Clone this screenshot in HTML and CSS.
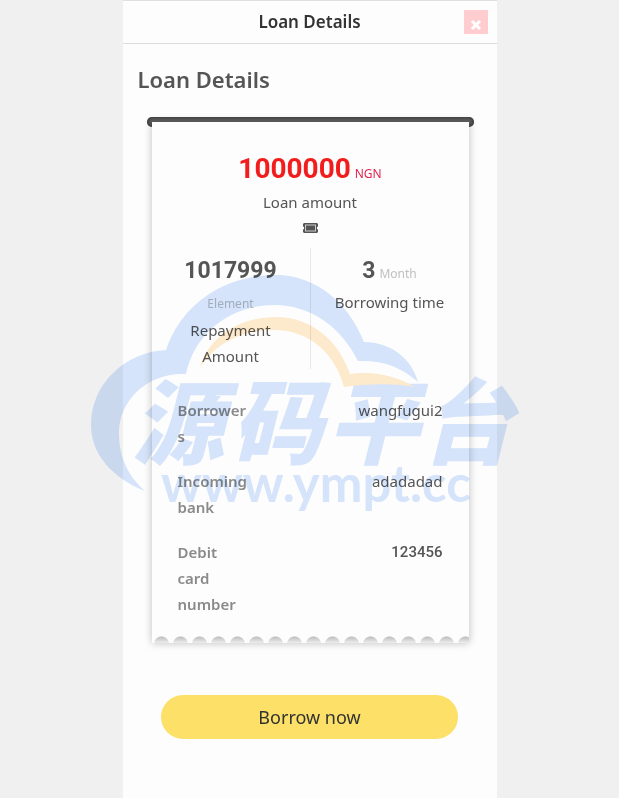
FILE: index.html
```
<!DOCTYPE html>
<html lang="en">
<head>
    <meta charset="utf-8">
    <meta name="viewport" content="width=device-width, initial-scale=1">
    <title>Loan Details</title>
    <link rel="stylesheet" href="styles.css">
</head>
<body>
    <div class="page">
        <header class="header">
            <span class="header-title">Loan Details</span>
            <button class="close" type="button" aria-label="Close">
                <svg width="12" height="12" viewBox="0 0 12 12"><path d="M2 2L10 10M10 2L2 10" stroke="#fff" stroke-width="3"/></svg>
            </button>
        </header>

        <main class="main">
            <h1 class="title">Loan Details</h1>

            <div class="receipt">
                <div class="slot"></div>
                <div class="paper">
                    <div class="amount">
                        <div><span class="num num-big">1000000</span> <span class="unit unit-red">NGN</span></div>
                        <div class="text">Loan amount</div>
                        <svg class="ticket" width="15" height="10" viewBox="0 0 15 10">
                            <path d="M1 0H14L15 1V3.500L14 4V6L15 6.500V9L14 10H1L0 9V6.500L1 6V4L0 3.500V1Z" fill="#555"/>
                            <rect x="2.500" y="2" width="10" height="6" fill="#555" stroke="#ccc"/>
                        </svg>
                    </div>

                    <div class="stats">
                        <div class="stat">
                            <span class="num">1017999</span> <span class="unit">Element</span>
                            <div class="text">Repayment Amount</div>
                        </div>
                        <div class="stat">
                            <span class="num">3</span> <span class="unit">Month</span>
                            <div class="text">Borrowing time</div>
                        </div>
                    </div>

                    <dl class="info">
                        <div class="row">
                            <dt class="label">Borrowers</dt>
                            <dd class="value">wangfugui2</dd>
                        </div>
                        <div class="row">
                            <dt class="label">Incoming bank</dt>
                            <dd class="value">adadadad</dd>
                        </div>
                        <div class="row">
                            <dt class="label">Debit card number</dt>
                            <dd class="value value-num">123456</dd>
                        </div>
                    </dl>
                    <div class="teeth"></div>
                </div>
            </div>

            <button class="submit" type="button">Borrow now</button>
        </main>

        <svg class="watermark" viewBox="90 270 430 250" aria-hidden="true">
            <g fill="#d7e6fc">
                <path d="M144 491C112 478 90 455 90 425C90 384 124 352 165 350C180 305 222 275 275 275C316 275 348 304 363 342C390 342 411 359 417 382C399 366 381 360 357 361C340 327 310 305 273 305C230 305 194 332 185 374C147 372 118 400 118 433C118 458 128 477 144 491Z"/>
                <text class="mark-name" y="457"><tspan x="131">源</tspan><tspan x="230">码</tspan><tspan x="326">平</tspan><tspan x="420">台</tspan></text>
                <text class="mark-url" x="160" y="502">www.ympt.cc</text>
            </g>
            <path fill="#ffebcd" d="M199 367C208 337 238 317 275 317C309 317 337 339 349 374C372 371 393 375 414 387C390 383 367 384 343 387C334 353 308 330 273 330C240 330 215 343 199 367Z"/>
        </svg>
    </div>
</body>
</html>
```
FILE: styles.css
```
* {
    margin: 0;
    padding: 0;
    box-sizing: border-box;
}

body {
    background-color: #f0f0f0;
    color: #555;
    font: 15px/26px "Noto Sans", "Open Sans", sans-serif;
}

button {
    border: 0;
    font-family: inherit;
    cursor: pointer;
}

.page {
    position: relative;
    max-width: 374px;
    min-height: 100vh;
    margin: 0 auto;
    background-color: #fdfdfd;
}

.header {
    display: grid;
    grid-template-columns: 24px 1fr 24px;
    align-items: center;
    height: 44px;
    padding: 0 9px;
    border-top: 1px solid #e0e0e0;
    border-bottom: 1px solid #dcdcdc;
}

.header-title {
    grid-column: 2;
    color: #333;
    font-size: 17px;
    font-weight: 600;
    line-height: 28px;
    text-align: center;
}

.close {
    display: flex;
    align-items: flex-end;
    justify-content: center;
    height: 24px;
    padding-bottom: 3px;
    background-color: #ffcccf;
}

.main {
    padding: 20px 15px;
}

.title {
    font-size: 22px;
    font-weight: 600;
    line-height: 30px;
}

.receipt {
    margin: 23px 8px 0 9px;
}

.slot {
    height: 10px;
    border-radius: 5px;
    background-color: #666;
    box-shadow: inset 0 0 5px #222;
}

.paper {
    position: relative;
    margin: -5px 5px 0;
    padding-top: 27px;
    background-color: #fdfdfd;
    box-shadow: 0 0 8px rgba(0, 0, 0, 0.25);
}

.amount {
    text-align: center;
}

.num {
    font: bold 23px/36px Roboto, sans-serif;
}

.num-big {
    color: #f21d1d;
    font-size: 28px;
    line-height: 40px;
}

.unit {
    color: #c0c0c0;
    font-size: 12px;
}

.unit-red {
    color: #e0234e;
}

.ticket {
    display: block;
    margin: 8px auto 0;
}

.stats {
    display: flex;
    margin-top: 15px;
    padding-bottom: 28px;
}

.stat {
    flex: 1;
    padding: 5px 20px 0;
    text-align: center;
}

.stat + .stat {
    border-left: 1px solid #e8e8e8;
}

.info {
    padding: 0 26px 19px;
}

.row {
    display: flex;
    justify-content: space-between;
    margin-bottom: 19px;
}

.row:last-child {
    margin-bottom: 0;
}

.label {
    width: 72px;
    color: #8a8a8a;
    font-weight: 600;
    word-break: break-word;
}

.value-num {
    font: 500 15px/26px Roboto, sans-serif;
}

/* torn bottom edge */
.teeth {
    height: 7px;
    background:
        linear-gradient(transparent, #fdfdfd) 0 0 / 100% 9px,
        radial-gradient(circle at 50% 8px, #b8b8b8 0, #b8b8b8 7px, transparent 8px) 0 0 / 19px 7px repeat-x;
}

.submit {
    display: block;
    width: calc(100% - 47px);
    height: 44px;
    margin: 52px auto 0;
    border-radius: 22px;
    background-color: #fce067;
    color: #333;
    font-size: 18px;
}

.watermark {
    position: absolute;
    top: 270px;
    left: -32px;
    width: 430px;
    mix-blend-mode: multiply;
    pointer-events: none;
}

.mark-name {
    font: italic 900 92px "Noto Sans CJK SC", sans-serif;
}

.mark-url {
    font: 700 51px Lato, sans-serif;
}
```
